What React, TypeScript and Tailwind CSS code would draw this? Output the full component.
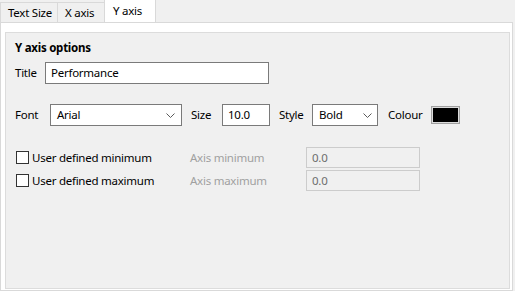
import React from 'react';

const Chevron = () => (
    <svg width="9" height="5" viewBox="0 0 9 5" className="shrink-0">
        <path d="M0.5 0.5 L4.5 4.5 L8.5 0.5" fill="none" stroke="#5a5a5a" strokeWidth="1" />
    </svg>
);

function Tab({ label, active, className }: { label: string; active?: boolean; className: string }) {
    return (
        <div
            className={`${className} flex items-center whitespace-nowrap border-t border-r border-[#d9d9d9] ${active ? 'h-[23px] bg-white border-l -ml-px pl-[8px] pb-[1px] relative z-10' : 'h-[20px] bg-[#f0f0f0] pl-[7px]'}`}
        >
            {label}
        </div>
    );
}

function CheckRow({ label, axisLabel }: { label: string; axisLabel: string }) {
    return (
        <div className="flex items-center h-[21px]">
            <div className="w-[175px] flex items-center">
                <span className="w-[13px] h-[13px] ml-px border border-[#333333] bg-white" />
                <span className="ml-[3px]">{label}</span>
            </div>
            <div className="w-[116px] text-[#a0a0a0]">{axisLabel}</div>
            <div className="w-[114px] h-[21px] border border-[#cccccc] bg-[#f0f0f0] flex items-center pl-[5px] text-[#6d6d6d]">0.0</div>
        </div>
    );
}

export default function App() {
    return (
        <div className="w-[515px] h-[291px] bg-[#f0f0f0] text-[11.5px] tracking-[-0.25px] leading-[16px] text-black font-['Noto_Sans',sans-serif] overflow-hidden">
            {/* Tab strip */}
            <div className="flex items-end h-[22px]">
                <Tab label="Text Size" className="w-[58px] border-l" />
                <Tab label="X axis" className="w-[47px]" />
                <Tab label="Y axis" active className="w-[52px]" />
            </div>

            {/* Tab page */}
            <div className="w-[513px] h-[269px] border border-[#d9d9d9] bg-white pt-[9px] pl-[4px] pr-[2px] pb-[1px]">
                <div className="h-full border border-[#dcdcdc] bg-[#f0f0f0] pl-[9px] pt-[7px]">
                    <div className="font-bold">Y axis options</div>

                    <div className="flex items-center mt-[6px] h-[22px]">
                        <span className="w-[30px]">Title</span>
                        <div className="w-[224px] h-[22px] border border-[#7a7a7a] bg-white flex items-center pl-[5px]">Performance</div>
                    </div>

                    <div className="flex items-center mt-[20px] h-[22px]">
                        <span className="w-[35px]">Font</span>
                        <div className="w-[132px] h-[22px] border border-[#7a7a7a] bg-white flex items-center justify-between pl-[6px] pr-[6px]">
                            <span>Arial</span>
                            <Chevron />
                        </div>
                        <span className="ml-[9px] w-[31px]">Size</span>
                        <div className="w-[48px] h-[22px] border border-[#7a7a7a] bg-white flex items-center pl-[5px]">10.0</div>
                        <span className="ml-[9px] w-[33px]">Style</span>
                        <div className="w-[66px] h-[22px] border border-[#7a7a7a] bg-white flex items-center justify-between pl-[6px] pr-[5px]">
                            <span>Bold</span>
                            <Chevron />
                        </div>
                        <span className="ml-[10px] w-[43px]">Colour</span>
                        <div className="w-[29px] h-[18px] border border-[#a0a0a0] bg-[#dcdcdc] p-px">
                            <div className="w-full h-full bg-black" />
                        </div>
                    </div>

                    <div className="flex flex-col gap-[2px] mt-[21px]">
                        <CheckRow label="User defined minimum" axisLabel="Axis minimum" />
                        <CheckRow label="User defined maximum" axisLabel="Axis maximum" />
                    </div>
                </div>
            </div>
        </div>
    );
}
